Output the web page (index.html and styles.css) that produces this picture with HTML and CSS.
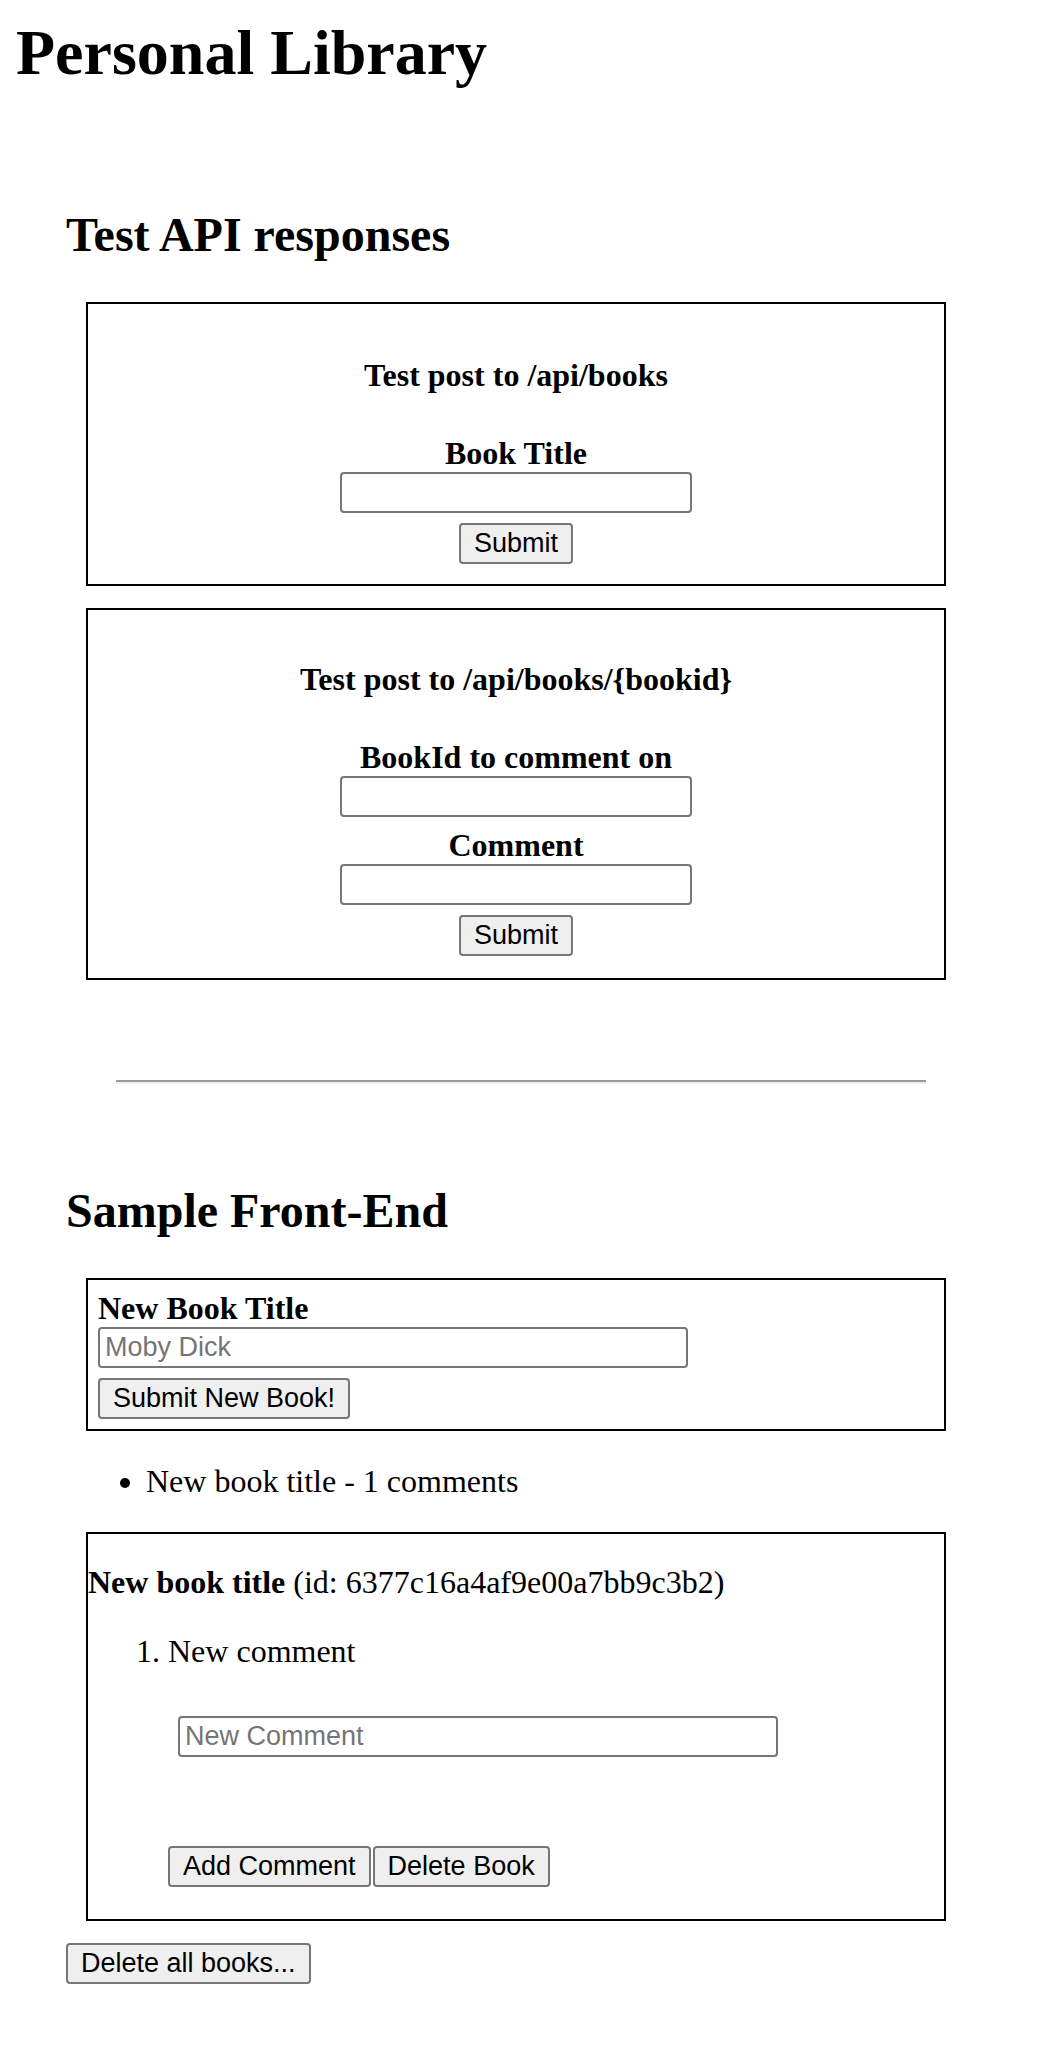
FILE: index.html
```html
<!DOCTYPE html>
<html lang="en">
<head>
<meta charset="utf-8">
<title>Personal Library</title>
<link rel="stylesheet" href="styles.css">
</head>
<body>
<header class="site-header">
  <h1 class="site-title">Personal Library</h1>
</header>

<section class="panel panel-test">
  <h2 class="panel-title">Test API responses</h2>
  <form class="border api-form">
    <h4 class="form-title">Test post to /api/books</h4>
    <label class="field-label">Book Title</label>
    <input class="text-input api-input" type="text" name="title">
    <input class="btn api-submit" type="submit" value="Submit">
  </form>
  <form class="border api-form api-form-comment">
    <h4 class="form-title">Test post to /api/books/{bookid}</h4>
    <label class="field-label">BookId to comment on</label>
    <input class="text-input api-input" type="text" name="id">
    <label class="field-label">Comment</label>
    <input class="text-input api-input" type="text" name="comment">
    <input class="btn api-submit" type="submit" value="Submit">
  </form>
</section>

<hr class="divider">

<section class="panel panel-sample">
  <h2 class="panel-title">Sample Front-End</h2>
  <form class="border new-book">
    <label class="field-label">New Book Title</label>
    <input class="text-input title-input" type="text" placeholder="Moby Dick">
    <button class="btn" type="button">Submit New Book!</button>
  </form>

  <ul class="book-list">
    <li>New book title - 1 comments</li>
  </ul>

  <div class="border book-detail">
    <p class="detail-title"><b>New book title</b> (id: 6377c16a4af9e00a7bb9c3b2)</p>
    <ol class="comments">
      <li>New comment
        <form class="comment-form">
          <input class="text-input comment-input" type="text" placeholder="New Comment">
        </form>
        <div class="detail-actions">
          <button class="btn" type="button">Add Comment</button>
          <button class="btn" type="button">Delete Book</button>
        </div>
      </li>
    </ol>
  </div>

  <button class="btn delete-all" type="button">Delete all books...</button>
</section>
</body>
</html>
```

FILE: styles.css
```css
html {
  background: #ffffff;
}

body {
  margin: 16px;
  font-family: "Liberation Serif", "Times New Roman", serif;
  font-size: 32px;
  color: #000000;
}

.site-title {
  font-size: 64px;
  font-weight: bold;
  margin: 0;
}

.panel {
  margin: 0 60px 0 50px;
}

.panel-title {
  font-size: 48px;
  font-weight: bold;
  margin: 40px 0;
  text-align: left;
}

.panel-test .panel-title {
  margin-top: 117px;
}

.border {
  border: 2px solid #000000;
  margin: 20px 20px 22px;
  padding: 10px;
}

.api-form {
  text-align: center;
}

.form-title {
  font-size: 32px;
  font-weight: bold;
  margin: 42.5px 0 41.5px;
}

.api-form-comment .form-title {
  margin-top: 40.5px;
}

.field-label {
  display: block;
  font-weight: bold;
}

.text-input {
  display: block;
  box-sizing: border-box;
  height: 41px;
  border: 2px solid #767676;
  border-radius: 4px;
  padding: 0 5px;
  font-family: "Liberation Sans", Arial, sans-serif;
  font-size: 27px;
  background: #ffffff;
  color: #000000;
}

.text-input::placeholder {
  color: #757575;
}

.api-input {
  width: 352px;
  margin: 0 auto 10px;
}

.btn {
  box-sizing: border-box;
  height: 41px;
  padding: 0 13px;
  border: 2px solid #767676;
  border-radius: 4px;
  background: #efefef;
  font-family: "Liberation Sans", Arial, sans-serif;
  font-size: 27px;
  color: #000000;
}

.api-submit {
  display: block;
  margin: 0 auto 10px;
}

.api-form-comment .api-submit {
  margin-bottom: 12px;
}

.title-input {
  width: 590px;
  margin: 0 0 10px;
}

.divider {
  margin: 100px 100px 98.5px;
  height: 0;
  border: 0;
  border-top: 2px solid #9a9a9a;
  border-bottom: 2px solid #eeeeee;
}

.book-list {
  margin: 32px 0;
  padding-left: 80px;
}

.book-detail {
  padding: 0;
}

.detail-title {
  margin: 30px 0 32px;
}

.comments {
  margin: 32px 0;
  padding-left: 80px;
}

.comment-form {
  margin: 46px 0 0 10px;
}

.comment-input {
  width: 600px;
}

.detail-actions {
  display: flex;
  gap: 2px;
  margin-top: 89px;
}

.delete-all {
  display: block;
}
```
